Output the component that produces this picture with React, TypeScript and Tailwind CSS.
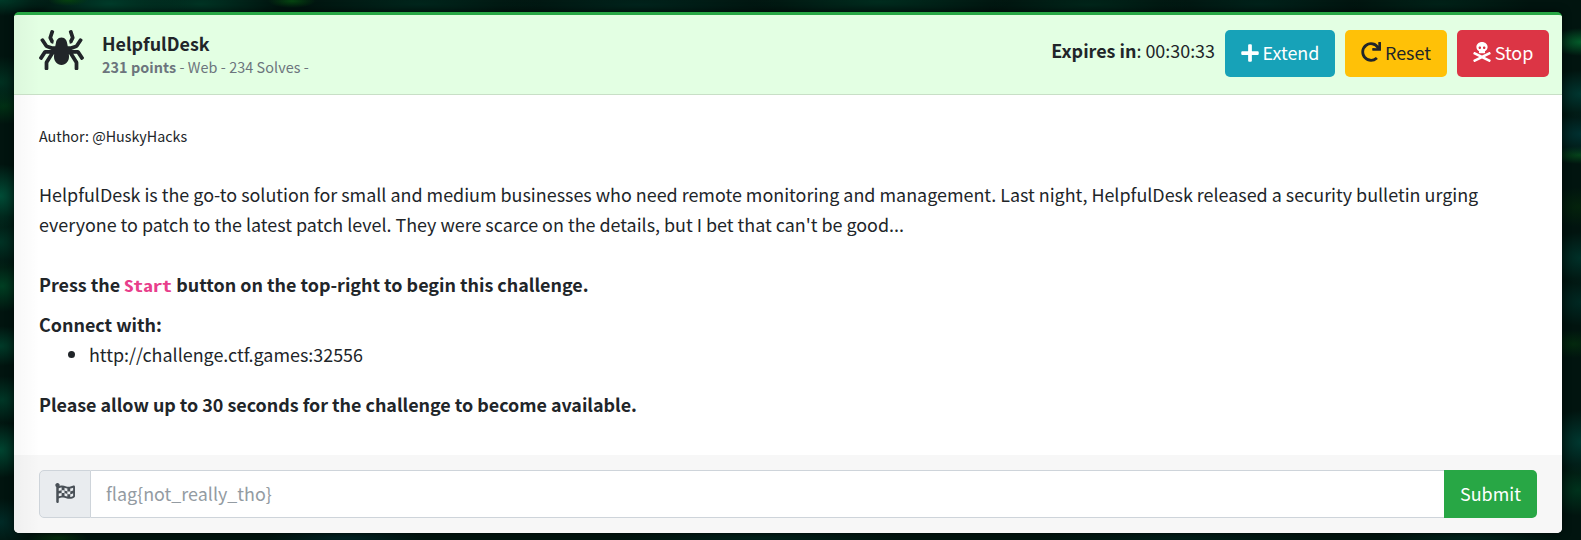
import React from "react";
import { FaSpider, FaPlus, FaRedo, FaSkullCrossbones, FaFlagCheckered } from "react-icons/fa";

// Glow spots of the page backdrop: x, y, horizontal radius, vertical radius, colour
const glows: [number, number, number, number, string][] = [
  [0, 0, 50, 16, "#003a28"],
  [0, 82, 40, 26, "#003020"],
  [4, 106, 40, 18, "#003014"],
  [0, 196, 36, 32, "#004c36"],
  [0, 242, 36, 26, "#003224"],
  [2, 286, 36, 26, "#003e22"],
  [0, 346, 36, 20, "#003a28"],
  [2, 400, 36, 24, "#003626"],
  [0, 450, 36, 28, "#004430"],
  [0, 522, 36, 24, "#002a26"],
  [68, 0, 20, 6, "#05400e"],
  [292, 1, 24, 7, "#054410"],
  [110, 4, 80, 24, "#003c2a"],
  [200, 4, 80, 22, "#003424"],
  [420, 4, 120, 18, "#00261c"],
  [640, 5, 140, 18, "#00241c"],
  [880, 2, 130, 18, "#002c1e"],
  [1090, 5, 100, 18, "#00261a"],
  [1260, 4, 100, 18, "#00221a"],
  [1440, 4, 90, 16, "#002218"],
  [1581, 42, 32, 14, "#045c2a"],
  [1581, 94, 40, 24, "#003630"],
  [1581, 134, 40, 22, "#003030"],
  [1580, 155, 30, 9, "#05441a"],
  [1578, 207, 30, 20, "#04220c"],
  [1581, 258, 36, 26, "#003028"],
  [1581, 302, 36, 24, "#002822"],
  [1574, 344, 30, 14, "#03280e"],
  [1581, 442, 36, 32, "#003830"],
  [1578, 490, 32, 26, "#00321c"],
  [58, 538, 30, 7, "#062e0e"],
  [345, 538, 80, 10, "#002426"],
  [760, 538, 140, 9, "#00221c"],
  [1180, 538, 140, 9, "#001f1a"],
  [1470, 538, 90, 9, "#00261e"],
];

const backdrop = glows
  .map(([x, y, rx, ry, c]) => `radial-gradient(${rx}px ${ry}px at ${x}px ${y}px, ${c}, ${c}00)`)
  .join(", ");

export default function App() {
  return (
    <div
      className="h-[540px] w-full overflow-hidden bg-[#01140f] pl-[14px] pr-[19px] pt-3 font-['Noto_Sans_CJK_SC',sans-serif] text-[17.92px] leading-[30px] text-[#212529]"
      style={{ backgroundImage: backdrop }}
    >
      <div className="rounded-[5px] shadow-[0_0_8px_rgba(0,0,0,0.6)]">
        <div className="flex h-[521px] flex-col overflow-hidden rounded-[5px] border-t-[3px] border-[#28a745] bg-white">
          <header className="flex h-20 shrink-0 items-start border-b border-[#c8dfc6] bg-[#e3ffe3] bg-linear-to-r from-black/3 to-transparent to-[26px] pl-[25px] pr-[13px] pt-[15px]">
            <FaSpider className="h-[40px] w-[45px]" />
            <div className="ml-[18px] flex flex-col">
              <div className="h-[25px] font-bold leading-[26px]">HelpfulDesk</div>
              <div className="text-[14.4px] leading-[24px] tracking-[0.06px] text-[#6c757d]"><b>231 points</b> - Web - 234 Solves -</div>
            </div>
            <div className="ml-auto flex items-center gap-[10px]">
              <span className="-mt-2"><b>Expires in</b>: 00:30:33</span>
              <button className="flex h-[47px] w-[110px] items-center justify-center gap-1 rounded-[5px] bg-[#17a2b8] pb-1 text-white"><FaPlus className="mt-0.5 h-5 w-[18px]" />Extend</button>
              <button className="flex h-[47px] w-[102px] items-center justify-center gap-1 rounded-[5px] bg-[#ffc107] pb-1"><FaRedo className="h-5 w-5" />Reset</button>
              <button className="flex h-[47px] w-[92px] items-center justify-center gap-1 rounded-[5px] bg-[#dc3545] pb-1 text-white"><FaSkullCrossbones className="h-5 w-[18px]" />Stop</button>
            </div>
          </header>
          <main className="flex-1 bg-linear-to-r from-black/3 to-transparent to-[26px] px-[25px] pt-[26px]">
            <p className="mb-[28px] text-[14.3px]">Author: @HuskyHacks</p>
            <p className="mb-[30px]">HelpfulDesk is the go-to solution for small and medium businesses who need remote monitoring and management. Last night, HelpfulDesk released a security bulletin urging everyone to patch to the latest patch level. They were scarce on the details, but I bet that can't be good...</p>
            <p className="mb-[10px] h-[30px] font-bold">Press the <code className="inline-block h-[30px] w-[48px] origin-left scale-x-[1.23] align-top font-['Noto_Sans_Mono_CJK_SC',monospace] text-[15.6px] leading-[32px] text-[#e83e8c]">Start</code> button on the top-right to begin this challenge.</p>
            <p className="font-bold">Connect with:</p>
            <ul className="mb-5 list-disc pl-[50px]"><li>http://challenge.ctf.games:32556</li></ul>
            <p className="font-bold tracking-[-0.015px]">Please allow up to 30 seconds for the challenge to become available.</p>
          </main>
          <footer className="flex h-[78px] shrink-0 bg-[#f7f7f7] bg-linear-to-r from-black/3 to-transparent to-[26px] px-[25px] pt-[15px]">
            <span className="flex h-12 w-[52px] items-center justify-center rounded-l-[5px] border border-[#ced4da] bg-[#e9ecef] pb-0.5 text-[#495057]"><FaFlagCheckered className="h-5 w-5" /></span>
            <div className="flex h-12 flex-1 items-center border-y border-[#ced4da] bg-white pb-0.5 pl-[15px] text-[#939ba2]">flag&#123;not_really_tho&#125;</div>
            <button className="h-12 w-[93px] rounded-r-[5px] bg-[#28a745] pb-0.5 text-white">Submit</button>
          </footer>
        </div>
      </div>
    </div>
  );
}
